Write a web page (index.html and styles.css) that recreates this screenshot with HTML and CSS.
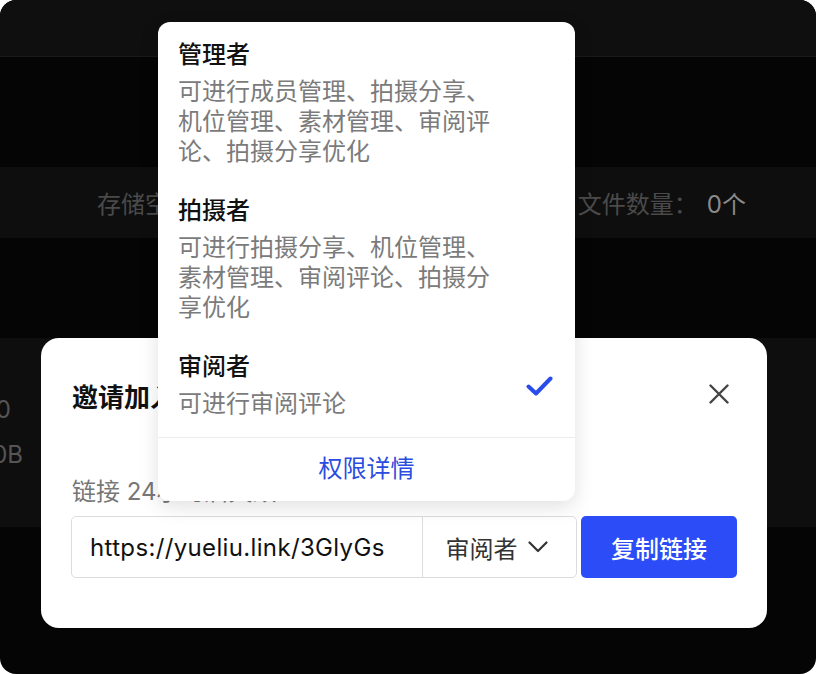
FILE: index.html
```html
<!DOCTYPE html>
<html lang="zh-CN">
<head>
<meta charset="utf-8">
<title>邀请加入团队</title>
<link rel="stylesheet" href="styles.css">
</head>
<body>
<div class="window">
  <div class="header"></div>
  <div class="gap-a"></div>
  <div class="stats">
    <span class="stat-left">存储空间：0B / 100GB</span>
    <span class="stat-right">文件数量：<span class="stat-val">0个</span></span>
  </div>
  <div class="gap-b"></div>
  <div class="table-row">
    <div class="cells">
      <div class="cell">成员 0</div>
      <div class="cell cell-b">已用 0B</div>
    </div>
  </div>

  <div class="modal">
    <div class="modal-head">
      <div class="modal-title">邀请加入团队</div>
      <svg class="close" width="20" height="20" viewBox="0 0 20 20"><path d="M1.5 1.5 L18.5 18.5 M18.5 1.5 L1.5 18.5" stroke="#444" stroke-width="2.4" stroke-linecap="round" fill="none"/></svg>
    </div>
    <div class="label">链接 24小时后失效</div>
    <div class="link-row">
      <div class="field">
        <div class="url">https://yueliu.link/3GlyGs</div>
        <div class="role">
          <span>审阅者</span>
          <svg width="20" height="12" viewBox="0 0 20 12"><path d="M1.5 1.5 L10 10 L18.5 1.5" stroke="#333" stroke-width="2.2" stroke-linecap="round" stroke-linejoin="round" fill="none"/></svg>
        </div>
      </div>
      <div class="copy-btn">复制链接</div>
    </div>
  </div>

  <div class="dropdown">
    <div class="list">
      <div class="item">
        <div class="item-text">
          <div class="name">管理者</div>
          <div class="desc">可进行成员管理、拍摄分享、机位管理、素材管理、审阅评论、拍摄分享优化</div>
        </div>
      </div>
      <div class="item">
        <div class="item-text">
          <div class="name">拍摄者</div>
          <div class="desc">可进行拍摄分享、机位管理、素材管理、审阅评论、拍摄分享优化</div>
        </div>
      </div>
      <div class="item">
        <div class="item-text">
          <div class="name">审阅者</div>
          <div class="desc">可进行审阅评论</div>
        </div>
        <svg class="check" width="27" height="20" viewBox="0 0 27 20"><path d="M2.5 10.5 L10 17.5 L24.5 2.5" stroke="#2a4ce8" stroke-width="4" stroke-linecap="round" stroke-linejoin="round" fill="none"/></svg>
      </div>
    </div>
    <div class="more">权限详情</div>
  </div>
</div>
</body>
</html>
```

FILE: styles.css
```css
* { box-sizing: border-box; }
html, body { margin: 0; padding: 0; background: #ffffff; }
body {
  font-family: "Inter", "Noto Sans CJK SC", sans-serif;
}
.window {
  position: relative;
  width: 816px;
  height: 674px;
  background: #050505;
  border-radius: 16px;
  overflow: hidden;
}
.header {
  height: 57px;
  background: #0f0f0f;
  border-bottom: 1px solid #1a1a1a;
}
.gap-a { height: 110px; }
.stats {
  height: 71px;
  background: #0e0e0e;
  display: flex;
  align-items: center;
  padding: 0 70px 0 97px;
  font-size: 24px;
  color: #4a4a4a;
  white-space: nowrap;
}
.stat-right { margin-left: auto; }
.stat-val { color: #8a8a8a; margin-left: 9px; }
.gap-b { height: 100px; }
.table-row {
  height: 189px;
  background: #0e0e0e;
  padding-top: 57px;
}
.cells {
  width: 23px;
  display: flex;
  flex-direction: column;
  align-items: flex-end;
  gap: 15px;
  font-size: 24px;
  line-height: 30px;
  color: #555555;
  white-space: nowrap;
}
.cell { padding-right: 12px; }
.cell-b { padding-right: 0; }

.modal {
  position: absolute;
  left: 41px;
  top: 338px;
  width: 726px;
  height: 290px;
  background: #ffffff;
  border-radius: 18px;
  padding: 39px 30px 0 30px;
}
.modal-head {
  display: flex;
  align-items: center;
  justify-content: space-between;
  height: 36px;
  padding-left: 1px;
}
.modal-title {
  font-size: 26px;
  font-weight: 700;
  color: #111111;
}
.close { margin-top: -3px; margin-right: 8px; }
.label {
  margin-top: 64px;
  padding-left: 1px;
  font-size: 24px;
  line-height: 30px;
  color: #777777;
}
.link-row {
  display: flex;
  margin-top: 9px;
  height: 62px;
}
.field {
  display: flex;
  width: 506px;
  flex: none;
  border: 1px solid #dcdcdc;
  border-radius: 5px;
}
.url {
  width: 350px;
  display: flex;
  align-items: center;
  padding-left: 18px;
  font-size: 24px;
  letter-spacing: 0.35px;
  color: #111111;
  white-space: nowrap;
}
.role {
  flex: 1;
  border-left: 1px solid #dcdcdc;
  display: flex;
  align-items: center;
  justify-content: center;
  gap: 10px;
  padding-right: 6px;
  font-size: 24px;
  color: #333333;
}
.copy-btn {
  width: 156px;
  flex: none;
  margin-left: 4px;
  background: #2b4cf7;
  border-radius: 5px;
  color: #ffffff;
  font-size: 24px;
  font-weight: 500;
  display: flex;
  align-items: center;
  justify-content: center;
}

.dropdown {
  position: absolute;
  left: 158px;
  top: 22px;
  width: 417px;
  background: #ffffff;
  border-radius: 12px;
  box-shadow: 0 6px 20px rgba(0, 0, 0, 0.12);
}
.list {
  padding: 18px 20px 18px;
  display: flex;
  flex-direction: column;
  gap: 29px;
}
.item {
  display: flex;
  align-items: center;
  justify-content: space-between;
}
.name {
  font-size: 24px;
  line-height: 30px;
  font-weight: 500;
  color: #111111;
}
.desc {
  margin-top: 7px;
  max-width: 324px;
  font-size: 24px;
  line-height: 30px;
  color: #7b7b7b;
}
.check { margin-right: 2px; }
.more {
  border-top: 1px solid #ececec;
  padding: 16px 0 17px;
  text-align: center;
  font-size: 24px;
  line-height: 30px;
  color: #2a4ce0;
}
```
